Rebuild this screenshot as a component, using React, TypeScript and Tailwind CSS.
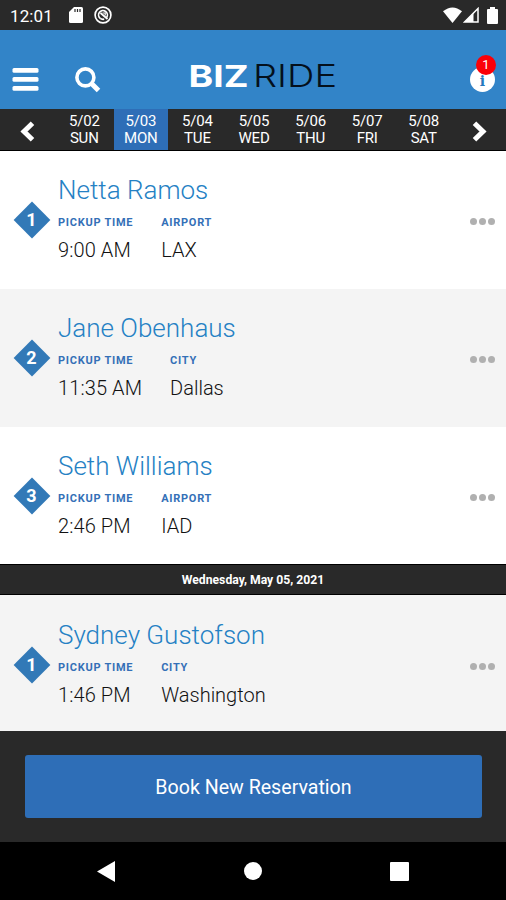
import { useState } from 'react'

interface Ride {
  id: number
  stop: number
  name: string
  time: string
  placeLabel: 'Airport' | 'City'
  place: string
}

const days = [
  { date: '5/02', day: 'SUN' },
  { date: '5/03', day: 'MON' },
  { date: '5/04', day: 'TUE' },
  { date: '5/05', day: 'WED' },
  { date: '5/06', day: 'THU' },
  { date: '5/07', day: 'FRI' },
  { date: '5/08', day: 'SAT' },
]

const mondayRides: Ride[] = [
  { id: 1, stop: 1, name: 'Netta Ramos', time: '9:00 AM', placeLabel: 'Airport', place: 'LAX' },
  { id: 2, stop: 2, name: 'Jane Obenhaus', time: '11:35 AM', placeLabel: 'City', place: 'Dallas' },
  { id: 3, stop: 3, name: 'Seth Williams', time: '2:46 PM', placeLabel: 'Airport', place: 'IAD' },
]

const wednesdayRides: Ride[] = [
  { id: 4, stop: 1, name: 'Sydney Gustofson', time: '1:46 PM', placeLabel: 'City', place: 'Washington' },
]

function StatusBar() {
  return (
    <div className="h-[30px] shrink-0 bg-[#292929] flex items-center justify-between pl-[10px] pr-[7px] text-white">
      <div className="flex items-center">
        <span className="w-[59px] text-[17px] leading-[30px] pt-px tracking-[0.1px]">12:01</span>
        <svg className="w-[14px] h-4" viewBox="0 0 14 16" fill="currentColor">
          <path d="M5 0h7.5Q14 0 14 1.5v13Q14 16 12.500 16h-11Q0 16 0 14.500V5z" />
          <path d="M6 2v3M8.500 2v3M11 2v3" stroke="#292929" strokeWidth="1.200" />
        </svg>
        <svg className="w-[18px] h-[18px] ml-[11px]" viewBox="0 0 18 18" fill="none" stroke="currentColor">
          <circle cx="9" cy="9" r="7.900" strokeWidth="1.700" />
          <path d="M6.200 12.400A4.400 4.400 0 1 1 12.600 11.500" strokeWidth="1.700" />
          <path d="M6.500 7l7 6M6.200 12.400q1.500 1.200 4 .8" strokeWidth="1.700" />
          <path d="M8.500 7h2.700v2.500" strokeWidth="1.200" />
        </svg>
      </div>
      <div className="flex items-center">
        <svg className="w-[19px] h-4" viewBox="0 0 19 16" fill="currentColor">
          <path d="M0 4.200Q9.500 -3.400 19 4.200L9.500 16z" />
        </svg>
        <svg className="w-4 h-4 ml-px" viewBox="0 0 16 16">
          <path d="M15 1.500V15H1.500z" fill="none" stroke="currentColor" strokeWidth="1.500" />
          <path d="M10.500 6V15H1.500z" fill="currentColor" />
        </svg>
        <svg className="w-[11px] h-[17px] ml-2 mr-[1px]" viewBox="0 0 11 17" fill="currentColor">
          <path d="M3 0h5v2h2q1 0 1 1v13q0 1-1 1H1q-1 0-1-1V3q0-1 1-1h2z" />
        </svg>
      </div>
    </div>
  )
}

function Header() {
  return (
    <header className="h-[79px] shrink-0 bg-[#3284c8] flex items-start pl-3 pr-[11px] text-white">
      <button className="mt-[38px]" aria-label="Menu">
        <svg className="w-[27px] h-[23px]" viewBox="0 0 27 23" fill="currentColor">
          <rect x="0.500" y="0" width="26" height="4.800" rx="1.500" />
          <rect x="0.500" y="9" width="26" height="4.800" rx="1.500" />
          <rect x="0.500" y="18" width="26" height="4.800" rx="1.500" />
        </svg>
      </button>
      <button className="mt-[37px] ml-9" aria-label="Search">
        <svg className="w-[26px] h-[26px]" viewBox="0 0 26 26" fill="none" stroke="currentColor">
          <circle cx="10.400" cy="10.400" r="8.500" strokeWidth="3.600" />
          <path d="M17 17l6.500 6.500" strokeWidth="5" />
        </svg>
      </button>
      <svg className="w-[154px] h-[44px] ml-[84px] mt-6" viewBox="0 0 154 44" aria-label="Biz Ride">
        <text x="3.500" y="33" fontSize="30.500" fontWeight="700" fill="#fff" textLength="60" lengthAdjust="spacingAndGlyphs" className="font-['Inter']">BIZ</text>
        <text x="68" y="33" fontSize="30.500" fontWeight="300" fill="#04101c" textLength="84" lengthAdjust="spacingAndGlyphs" className="font-['Inter']">RIDE</text>
      </svg>
      <button className="relative ml-auto mt-[37px] w-[25px] h-[25px] rounded-full bg-white" aria-label="Notifications">
        <span className="block font-['DejaVu_Serif'] text-[14px] leading-[28px] font-bold text-[#2679bd]">i</span>
        <span className="absolute left-[6px] -top-3 w-5 h-5 rounded-full bg-[#fb0007] text-[13px] leading-5 text-center">1</span>
      </button>
    </header>
  )
}

function DateBar() {
  const [selected, setSelected] = useState('5/03')

  return (
    <nav className="h-[42px] shrink-0 bg-[#292929] border-b border-black flex text-white">
      <button className="w-[57px] pr-[2px] pt-[3px] flex items-center justify-center" aria-label="Previous week">
        <svg className="w-[15px] h-[21px]" viewBox="0 0 15 21" fill="none" stroke="currentColor" strokeWidth="5">
          <path d="M12.500 2.200L4 10.500l8.500 8.300" />
        </svg>
      </button>
      <div className="w-[396px] grid grid-cols-7">
        {days.map((d) => (
          <button
            key={d.date}
            onClick={() => setSelected(d.date)}
            className={`mr-[2px] text-[15px] leading-[17px] tracking-[-0.2px] ${selected === d.date ? 'bg-[#2e6eb7]' : ''}`}
          >
            <span className="block pt-px">{d.date}</span>
            <span className="block">{d.day}</span>
          </button>
        ))}
      </div>
      <button className="flex-1 pt-[3px] flex items-center justify-center" aria-label="Next week">
        <svg className="w-[15px] h-[21px]" viewBox="0 0 15 21" fill="none" stroke="currentColor" strokeWidth="5">
          <path d="M2.500 2.200L11 10.500l-8.500 8.300" />
        </svg>
      </button>
    </nav>
  )
}

function RideRow({ ride, className }: { ride: Ride; className: string }) {
  return (
    <div className={`shrink-0 flex items-start pl-[13px] pr-[11px] ${className}`}>
      <div className="relative mt-[50px] w-[37px] h-[37px] flex items-center justify-center">
        <div className="absolute inset-[5.5px] rotate-45 bg-[#3279b7]" />
        <span className="relative text-[18px] leading-none font-bold text-white">{ride.stop}</span>
      </div>
      <div className="ml-2 pt-[23px]">
        <h2 className="text-[26px] leading-8 font-light text-[#2581c4]">{ride.name}</h2>
        <div className="flex gap-[28px] mt-[9px]">
          <div>
            <p className="text-[11px] leading-4 font-bold uppercase tracking-[0.73px] text-[#3470b7]">Pickup Time</p>
            <p className="mt-[7px] text-[20px] leading-6 font-light tracking-[0.1px] text-[#111]">{ride.time}</p>
          </div>
          <div>
            <p className="text-[11px] leading-4 font-bold uppercase tracking-[0.73px] text-[#3470b7]">{ride.placeLabel}</p>
            <p className="mt-[7px] text-[20px] leading-6 font-light text-[#111]">{ride.place}</p>
          </div>
        </div>
      </div>
      <button className="ml-auto mt-[67px] flex gap-[2px]" aria-label="More">
        <span className="w-[7px] h-[7px] rounded-full bg-[#b0b0b0]" />
        <span className="w-[7px] h-[7px] rounded-full bg-[#b0b0b0]" />
        <span className="w-[7px] h-[7px] rounded-full bg-[#b0b0b0]" />
      </button>
    </div>
  )
}

export default function App() {
  return (
    <div className="w-[506px] h-[900px] flex flex-col overflow-hidden bg-white font-['Roboto',sans-serif]">
      <StatusBar />
      <Header />
      <DateBar />

      {mondayRides.map((ride, i) => (
        <RideRow key={ride.id} ride={ride} className={i % 2 ? 'h-[138px] bg-[#f4f4f4]' : 'h-[138px] bg-white'} />
      ))}

      <div className="h-[31px] -mt-px shrink-0 bg-[#292929] border-y border-black text-center text-[12.2px] leading-[30px] font-bold text-white">
        Wednesday, May 05, 2021
      </div>

      {wednesdayRides.map((ride) => (
        <RideRow key={ride.id} ride={ride} className="h-[136px] pt-px bg-[#f4f4f4]" />
      ))}

      {/* Booking footer */}
      <div className="h-[111px] shrink-0 bg-[#292929] pt-6 pl-[25px] pr-6">
        <button className="w-full h-[63px] pt-[2px] rounded-[3px] bg-[#2e6eb7] text-[19.6px] text-white">
          Book New Reservation
        </button>
      </div>

      {/* Android navigation */}
      <div className="flex-1 bg-black flex items-center justify-between pl-[97px] pr-[97px]">
        <svg className="w-[18px] h-[21px]" viewBox="0 0 18 21" fill="#fff">
          <path d="M18 0v21L0 10.500z" />
        </svg>
        <span className="w-[18px] h-[18px] rounded-full bg-white" />
        <span className="w-[19px] h-[19px] rounded-[1px] bg-white" />
      </div>
    </div>
  )
}
